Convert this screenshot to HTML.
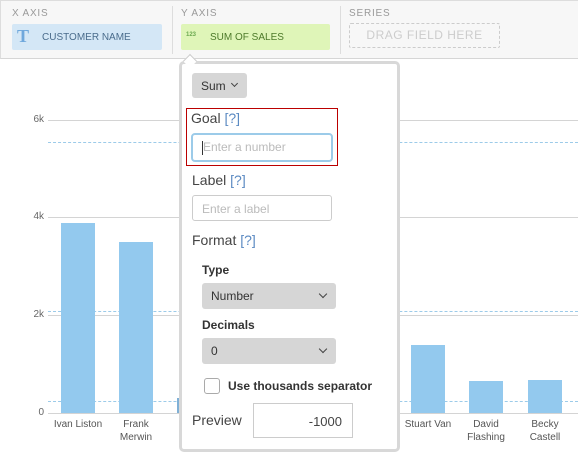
<!DOCTYPE html>
<html><head><style>
*{box-sizing:border-box;margin:0;padding:0}
body{width:578px;height:457px;overflow:hidden;background:#fff;font-family:"Liberation Sans",sans-serif;position:relative;color:#333}
.a{position:absolute}
.hdr{left:0;top:0;width:578px;height:59px;background:#f7f7f7;border-top:1px solid #ddd;border-bottom:1px solid #d6d6d6;border-left:1px solid #ddd}
.lab{font-size:10px;color:#999;letter-spacing:.8px}
.g{height:1px;background:#d4d4d4;left:48px;width:530px}
.d{height:0;border-top:1px dashed #9ccbe9;left:48px;width:530px}
.yl{font-size:10px;color:#666;width:44px;text-align:right}
.bar{background:#93c9ee;width:34px}
.xl{font-size:10px;color:#555;text-align:center;width:70px;line-height:13px}
.sel{background:#d6d6d6;border-radius:3px;font-size:12px;color:#333}
.chev{position:absolute;right:10px;top:8px;width:6px;height:6px;border-right:1.5px solid #444;border-bottom:1.5px solid #444;transform:rotate(45deg)}
.fl{font-size:14px;color:#444}
.q{color:#5b8ac2}
</style></head><body>
<div class="a hdr"></div>
<div class="a lab" style="left:12px;top:8px">X AXIS</div>
<div class="a" style="left:12px;top:24px;width:150px;height:26px;background:#d4e7f6;border-radius:2px"></div>
<div class="a" style="left:17px;top:26px;font-family:'Liberation Serif',serif;font-weight:bold;font-size:18px;color:#6fa8dc">T</div>
<div class="a" style="left:42px;top:32px;font-size:10px;color:#4a6c8c">CUSTOMER NAME</div>
<div class="a" style="left:172px;top:6px;width:1px;height:48px;background:#ddd"></div>
<div class="a lab" style="left:181px;top:8px">Y AXIS</div>
<div class="a" style="left:181px;top:24px;width:149px;height:26px;background:#dff5b8;border-radius:2px"></div>
<div class="a" style="left:186px;top:32px;font-size:6px;color:#6aa84f;font-weight:bold">123</div>
<div class="a" style="left:210px;top:32px;font-size:10px;color:#4d7a2a">SUM OF SALES</div>
<div class="a" style="left:340px;top:6px;width:1px;height:48px;background:#ddd"></div>
<div class="a lab" style="left:349px;top:8px">SERIES</div>
<div class="a" style="left:349px;top:23px;width:151px;height:25px;border:1px dashed #ccc;border-radius:2px;font-size:12px;color:#ccc;text-align:center;line-height:23px;letter-spacing:.5px">DRAG FIELD HERE</div>

<div class="a g" style="top:120px"></div><div class="a yl" style="left:0;top:114px">6k</div>
<div class="a g" style="top:217px"></div><div class="a yl" style="left:0;top:211px">4k</div>
<div class="a g" style="top:315px"></div><div class="a yl" style="left:0;top:309px">2k</div>
<div class="a g" style="top:413px"></div><div class="a yl" style="left:0;top:407px">0</div>
<div class="a d" style="top:142px"></div>
<div class="a d" style="top:311px"></div>
<div class="a d" style="top:401px"></div>
<div class="a bar" style="left:61px;top:223px;height:190px"></div>
<div class="a bar" style="left:119px;top:242px;height:171px"></div>
<div class="a bar" style="left:177px;top:398px;height:15px;background:#7fb0d6"></div>
<div class="a bar" style="left:411px;top:345px;height:68px"></div>
<div class="a bar" style="left:469px;top:381px;height:32px"></div>
<div class="a bar" style="left:528px;top:380px;height:33px"></div>
<div class="a xl" style="left:43px;top:418px">Ivan Liston</div>
<div class="a xl" style="left:101px;top:418px">Frank<br>Merwin</div>
<div class="a xl" style="left:393px;top:418px">Stuart Van</div>
<div class="a xl" style="left:451px;top:418px">David<br>Flashing</div>
<div class="a xl" style="left:510px;top:418px">Becky<br>Castell</div>

<div class="a" style="left:179px;top:61px;width:221px;height:391px;background:#fff;border:3px solid #d8d8d8;border-radius:5px"></div>
<div class="a" style="left:185px;top:56px;width:10px;height:10px;background:#fff;border-left:1px solid #ccc;border-top:1px solid #ccc;transform:rotate(45deg)"></div>
<div class="a sel" style="left:192px;top:73px;width:55px;height:25px;padding:6px 0 0 9px">Sum<span style="position:absolute;left:40px;top:8px;width:5px;height:5px;border-right:1.3px solid #444;border-bottom:1.3px solid #444;transform:rotate(45deg)"></span></div>
<div class="a" style="left:186px;top:108px;width:152px;height:58px;border:1px solid #b00"></div>
<div class="a fl" style="left:191px;top:110px">Goal <span class="q">[?]</span></div>
<div class="a" style="left:191px;top:133px;width:142px;height:29px;border:2px solid #9ccbe9;border-radius:4px;font-size:12px;color:#bbb;padding:5px 0 0 10px"><span style="position:absolute;left:9px;top:6px;width:1px;height:14px;background:#333"></span>Enter a number</div>
<div class="a fl" style="left:192px;top:172px">Label <span class="q">[?]</span></div>
<div class="a" style="left:192px;top:195px;width:140px;height:26px;border:1px solid #ccc;border-radius:3px;font-size:12px;color:#bbb;padding:6px 0 0 9px">Enter a label</div>
<div class="a fl" style="left:192px;top:232px">Format <span class="q">[?]</span></div>
<div class="a" style="left:202px;top:263px;font-size:12px;font-weight:bold;color:#333">Type</div>
<div class="a sel" style="left:202px;top:283px;width:134px;height:26px;padding:6px 0 0 9px">Number<span class="chev"></span></div>
<div class="a" style="left:202px;top:318px;font-size:12px;font-weight:bold;color:#333">Decimals</div>
<div class="a sel" style="left:202px;top:338px;width:134px;height:26px;padding:6px 0 0 9px">0<span class="chev"></span></div>
<div class="a" style="left:204px;top:378px;width:16px;height:16px;border:1px solid #aaa;border-radius:3px"></div>
<div class="a" style="left:228px;top:379px;font-size:12px;font-weight:bold;color:#333">Use thousands separator</div>
<div class="a fl" style="left:192px;top:412px">Preview</div>
<div class="a" style="left:253px;top:403px;width:100px;height:35px;border:1px solid #ccc;font-size:13px;color:#444;text-align:right;padding:10px 10px 0 0">-1000</div>
</body></html>
